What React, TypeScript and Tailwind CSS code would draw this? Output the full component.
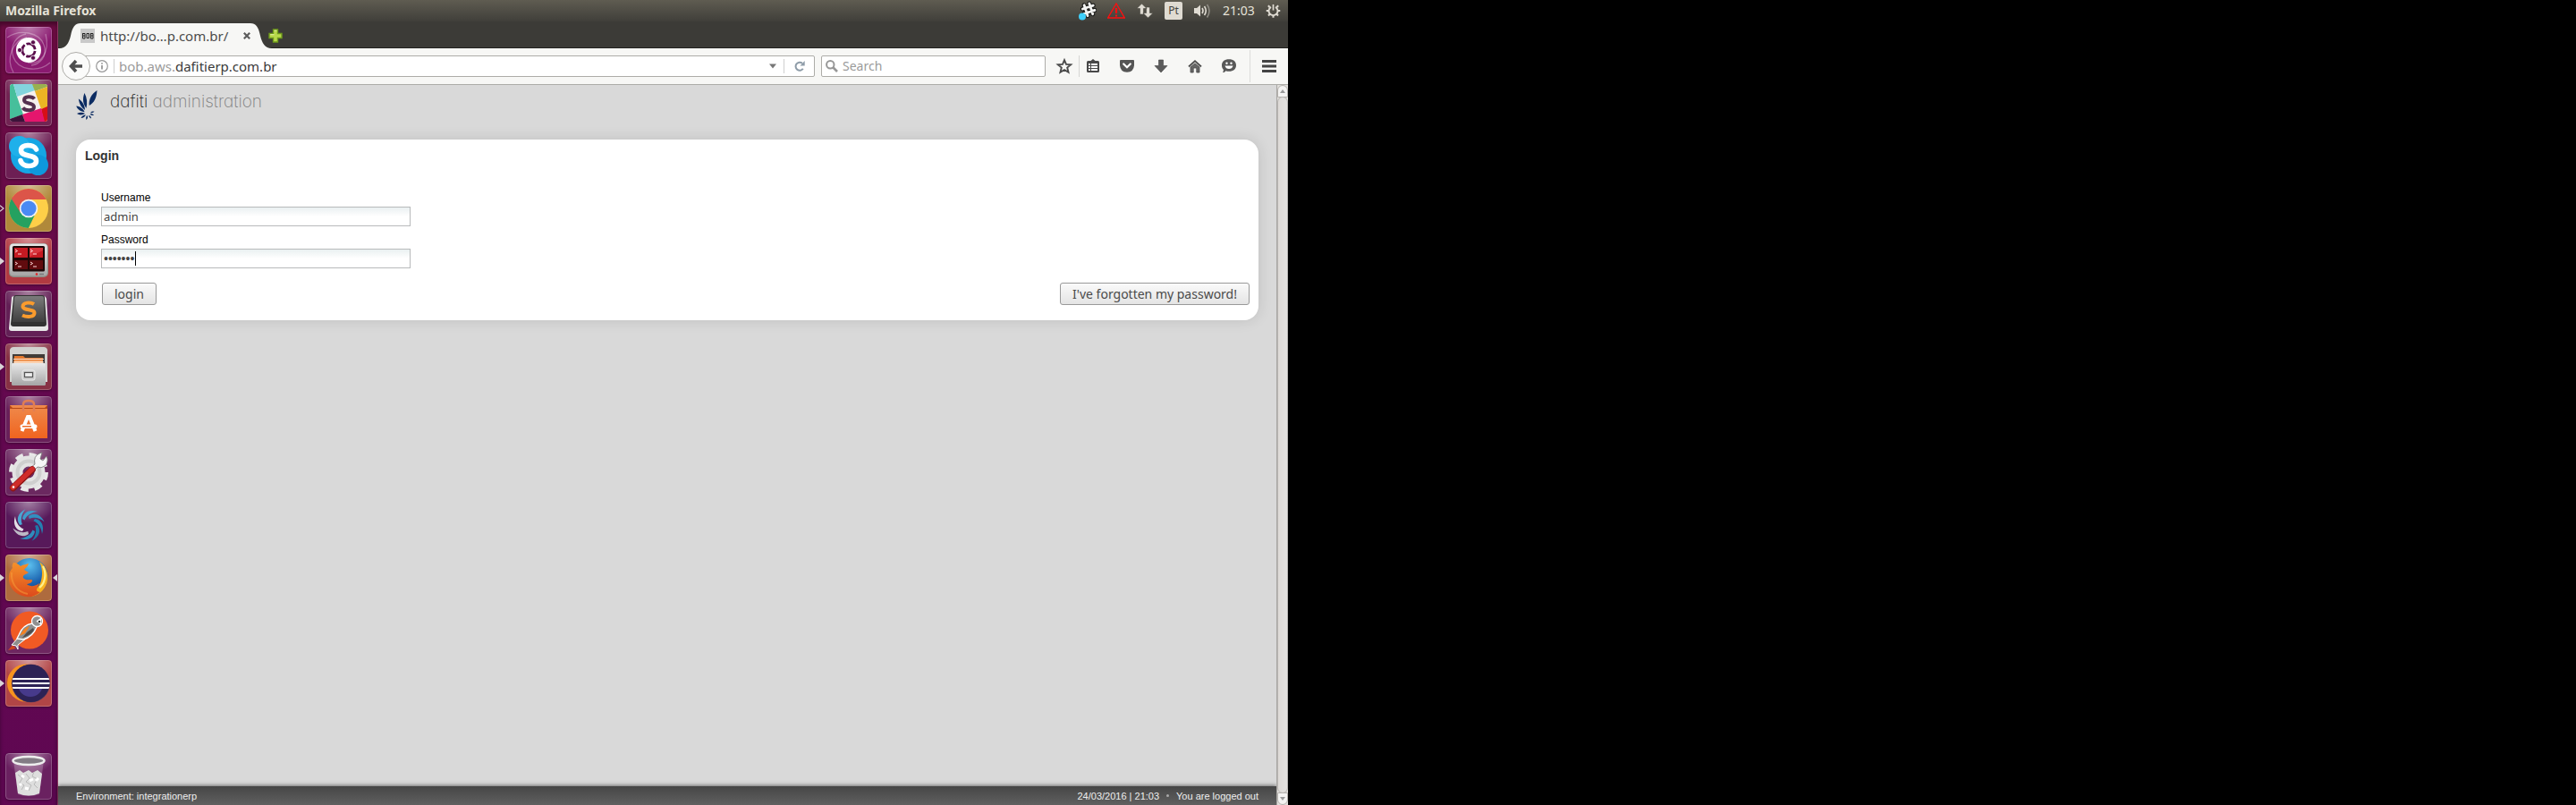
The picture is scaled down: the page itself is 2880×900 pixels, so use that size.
import React from "react";

type TileProps = {
  label: string;
  tint: string;
  pip?: "solid" | "outline";
  active?: boolean;
  children: React.ReactNode;
};

function Tile({ label, tint, pip, active, children }: TileProps) {
  return (
    <li className="grid grid-cols-[6px_52px_6px] items-center">
      <svg viewBox="0 0 6 8" className="h-2 w-[6px]" aria-hidden="true">
        {pip === "solid" && <path d="M0 0L5 4L0 8Z" fill="#d9d5d8" />}
        {pip === "outline" && <path d="M0 .8L4 4L0 7.2" fill="none" stroke="#d9d5d8" strokeWidth="1.1" />}
      </svg>
      <button
        type="button"
        aria-label={label}
        className={`h-[52px] w-[52px] overflow-hidden rounded-[4px] shadow-[0_1px_3px_rgba(0,0,0,0.35)] ${tint}`}
      >
        <svg viewBox="0 0 52 52" className="block h-full w-full" aria-hidden="true">
          <ellipse cx="26" cy="0" rx="30" ry="24" fill="url(#sheen)" />
          {children}
          <rect x=".5" y=".5" width="51" height="51" rx="3.5" fill="none" stroke="#fff" strokeOpacity=".22" />
        </svg>
      </button>
      <svg viewBox="0 0 6 8" className="h-2 w-[6px]" aria-hidden="true">
        {active && <path d="M6 0L1 4L6 8Z" fill="#d9d5d8" />}
      </svg>
    </li>
  );
}

const shutterBlades = [
  { angle: 0, fill: "#3f9ccb" },
  { angle: 45, fill: "#318fc0" },
  { angle: 90, fill: "#2480b2" },
  { angle: 135, fill: "#1f76a8" },
  { angle: 180, fill: "#2f8dbd" },
  { angle: 225, fill: "#bdb9c6" },
  { angle: 270, fill: "#e2dfe6" },
  { angle: 315, fill: "#4aa6d2" },
];

function Launcher() {
  return (
    <nav
      aria-label="Launcher"
      className="flex w-[65px] shrink-0 flex-col justify-between border-r border-[#8b3560] bg-gradient-to-b from-[#6d0c42] via-[#640850] to-[#5f0752] pb-[6px] pt-[6px] shadow-[inset_0_4px_4px_rgba(0,0,0,0.35)]"
    >
      <svg width="0" height="0" className="absolute" aria-hidden="true">
        <defs>
          <radialGradient id="sheen" cx="50%" cy="50%" r="50%">
            <stop offset="0" stopColor="#fff" stopOpacity=".45" />
            <stop offset="1" stopColor="#fff" stopOpacity="0" />
          </radialGradient>
          <linearGradient id="orangeBag" x1="0" y1="0" x2="0" y2="1">
            <stop offset="0" stopColor="#ef8a4c" />
            <stop offset="1" stopColor="#f0641f" />
          </linearGradient>
          <linearGradient id="darkKey" x1="0" y1="0" x2="0" y2="1">
            <stop offset="0" stopColor="#7b7b7b" />
            <stop offset="1" stopColor="#3f3f3f" />
          </linearGradient>
          <linearGradient id="metal" x1="0" y1="0" x2="0" y2="1">
            <stop offset="0" stopColor="#e9e9e9" />
            <stop offset="1" stopColor="#a5a5a5" />
          </linearGradient>
          <linearGradient id="fox" x1="0" y1="0" x2="0" y2="1">
            <stop offset="0" stopColor="#f5912a" />
            <stop offset="1" stopColor="#dc4a1c" />
          </linearGradient>
          <radialGradient id="globe" cx="50%" cy="20%" r="80%">
            <stop offset="0" stopColor="#5bbfee" />
            <stop offset=".6" stopColor="#1b62ae" />
            <stop offset="1" stopColor="#123a7c" />
          </radialGradient>
          <clipPath id="slackClip"><rect x="5" y="5" width="42" height="42" rx="3" /></clipPath>
          <clipPath id="chromeClip"><circle cx="26" cy="26" r="22" /></clipPath>
          <clipPath id="eclipseClip"><circle cx="28.500" cy="26" r="21" /></clipPath>
        </defs>
      </svg>
      <ul className="flex flex-col gap-[7px]">
        <Tile label="Search your computer" tint="bg-[#8a1a70]">
          <g fill="none" stroke="#fff" strokeOpacity=".3" strokeWidth="1.3">
            <path d="M2 12C16 2 38 6 43 20C48 33 38 42 29 43" />
            <path d="M50 40C36 52 14 48 9 34C4 20 13 10 23 8" />
            <path d="M9 51C0 36 8 15 24 12" />
            <path d="M45 8C50 28 40 43 25 40" />
          </g>
          <circle cx="26" cy="26" r="14" fill="#fff" />
          <circle cx="26" cy="26" r="7.200" fill="none" stroke="#5a0e4c" strokeWidth="2.800" strokeDasharray="13 2.080" strokeDashoffset="-1" />
          <g fill="#5a0e4c" stroke="#fff" strokeWidth=".8">
            <circle cx="16" cy="26" r="2.600" /><circle cx="31" cy="17.300" r="2.600" /><circle cx="31" cy="34.700" r="2.600" />
          </g>
        </Tile>
        <Tile label="Slack" tint="bg-[#722453]">
          <g clipPath="url(#slackClip)">
            <rect x="5" y="5" width="42" height="42" fill="#f5f1ef" />
            <path d="M5 5H9L13 19L20 39L5 44Z" fill="#46bf9b" />
            <path d="M9 5H31L33 12L13 19Z" fill="#83d4dd" />
            <path d="M30 5H47V8L33 13Z" fill="#99b04f" />
            <path d="M33 13L47 8V31L40 33Z" fill="#ecb424" />
            <path d="M40 33L47 30V47H43Z" fill="#d60f16" />
            <path d="M19 39L40 32L44 47H22Z" fill="#e5166d" />
            <path d="M5 44L19 39L22 47H5Z" fill="#3c133a" />
          </g>
          <path d="M32.500 21.500C30 18.500 21 18 21 23C21 28 32 25 32 30.500C32 35.500 22 35 19.500 31.500" fill="none" stroke="#55304f" strokeWidth="4" />
        </Tile>
        <Tile label="Skype" tint="bg-[#6d1f54]">
          <circle cx="26" cy="26" r="20" fill="#16a6e4" />
          <circle cx="15.500" cy="15.500" r="11.500" fill="#1fb0ea" />
          <circle cx="36.500" cy="36.500" r="11.500" fill="#0e98dc" />
          <path d="M34.500 19C32 13 17.500 12.500 17.500 20C17.500 28.500 34.500 23.500 34.500 32C34.500 39.500 19 39.500 17 31.500" fill="none" stroke="#fff" strokeWidth="5.600" strokeLinecap="round" />
        </Tile>
        <Tile label="Google Chrome" tint="bg-[#b0893a]" pip="outline">
          <g clipPath="url(#chromeClip)">
            <rect width="52" height="52" fill="#fdcf48" />
            <path d="M4 8L17 30L26 36L34 31L24 52H0V8Z" fill="#25a160" />
            <path d="M6 14L14 2H44L49 16H26L17 31Z" fill="#dc5549" />
          </g>
          <circle cx="26" cy="26" r="10.300" fill="#f1f2f2" />
          <circle cx="26" cy="26" r="8.600" fill="#4a8af4" />
        </Tile>
        <Tile label="Terminator" tint="bg-[#b13a41]" pip="solid">
          <rect x="4" y="6" width="44" height="38" rx="5" fill="#8d8d86" />
          <rect x="5" y="6.500" width="42" height="36" rx="4" fill="url(#metal)" />
          <rect x="8" y="9" width="36" height="28.500" rx="1.500" fill="#1e0808" />
          <path d="M10 11h15v11H10zM27 11h15v11H27z" fill="#c51a22" />
          <path d="M10 25h15v10H10zM27 25h15v10H27z" fill="#610b0e" />
          <path d="M27 11h15v3L27 21z" fill="#e1434a" fillOpacity=".7" />
          <path d="M11 13l2.500 1.500L11 16M14 18h4M28 13l2.500 1.500L28 16M31 18h4M11 27l2.500 1.500L11 30M14 32h4M28 27l2.500 1.500L28 30M31 32h4" fill="none" stroke="#ffd9d9" strokeWidth="1" />
          <circle cx="35" cy="40.500" r="1.300" fill="#e02121" /><path d="M38 40.500h5" stroke="#777" strokeWidth="1.500" />
        </Tile>
        <Tile label="Sublime Text" tint="bg-[#632056]">
          <path d="M7 8Q7 6 10 6H43Q45 6 46 9L48 42Q48 45 45 45H7Q4 45 4 42Z" fill="#e7e7e7" />
          <path d="M9 8Q9 5 12 5H41Q44 5 44 8L46 37Q46 40 43 40H9Q6 40 6 37Z" fill="#323232" />
          <path d="M10 8Q10 6 12 6H41Q43 6 43 8L44 35H8Z" fill="url(#darkKey)" />
          <path d="M32 15C28 12.500 19.500 13 19.500 17.500C19.500 22.500 32.500 20 32.500 25C32.500 29.500 24 30 19 27.500" fill="none" stroke="#f99b2d" strokeWidth="4" />
        </Tile>
        <Tile label="Files" tint="bg-[#873144]" pip="solid">
          <path d="M5 7Q6 4 9 4H43Q46 4 47 7V43H5Z" fill="#d2d2d0" />
          <rect x="8" y="12" width="36" height="12" fill="#413c38" />
          <path d="M10 14H20L22 16H42V24H9Z" fill="#e5792f" />
          <path d="M10 19H42V24H10Z" fill="#f8b27a" /><path d="M9 17.500H43M9 21H43" stroke="#fff" strokeWidth=".8" />
          <rect x="7" y="22" width="38" height="25" rx="1.500" fill="url(#metal)" />
          <rect x="19" y="30" width="14" height="11" rx="2" fill="#c9c9c9" stroke="#eee" />
          <rect x="21.500" y="32.500" width="9" height="5" fill="#eee" stroke="#555" strokeWidth="1.200" />
        </Tile>
        <Tile label="Ubuntu Software" tint="bg-[#68205a]">
          <path d="M5 10H47V47H5Z" fill="url(#orangeBag)" />
          <path d="M5 10L8 13H44L47 10V14H5Z" fill="#b74817" />
          <path d="M20 17V9Q20 5 26 5T32 9V17" fill="none" stroke="#e27e52" strokeWidth="2.500" />
          <path d="M18.500 39L25 23H27L33.500 39" fill="none" stroke="#fff" strokeWidth="4" />
          <rect x="16.500" y="31.500" width="19" height="4.500" rx="2" fill="#fff" />
          <rect x="19" y="33" width="10" height="1.500" fill="#ef6c28" />
        </Tile>
        <Tile label="System Settings" tint="bg-[#6b2860]">
          <circle cx="26" cy="26" r="19.500" fill="none" stroke="#e8e8e8" strokeWidth="5" strokeDasharray="8.500 6.816" />
          <circle cx="26" cy="26" r="12.500" fill="none" stroke="#e3e3e3" strokeWidth="12" />
          <circle cx="26" cy="26" r="12.500" fill="none" stroke="#cfcfcf" strokeWidth="4" />
          <path d="M29 20L33 17Q31 8 38 5L41 4L39 11L42 13L46 8Q49 14 44 19Q40 22 36 20L32 24Z" fill="#f6f6f6" stroke="#777" strokeWidth=".8" />
          <path d="M8.500 43.500L30 23" stroke="#8e1414" strokeWidth="7.500" strokeLinecap="round" />
          <path d="M8.500 43L30 22.500" stroke="#cf2c2a" strokeWidth="5.500" strokeLinecap="round" />
          <circle cx="9" cy="42.500" r="1.300" fill="#fff" />
        </Tile>
        <Tile label="Shutter" tint="bg-[#57195a]">
          {shutterBlades.map((blade) => (
            <path
              key={blade.angle}
              transform={`rotate(${blade.angle} 26 26)`}
              d="M19 19C20 11.500 27 8 36 11C30 11.500 24 14.500 21.500 20.500Z"
              fill={blade.fill}
            />
          ))}
        </Tile>
        <Tile label="Firefox" tint="bg-[#ae6b3e]" pip="solid" active>
          <circle cx="27" cy="24.500" r="20.500" fill="url(#globe)" />
          <path d="M38 8C47 14 50 26 45 35C41 43 34 47 26 47L22 42C32 42 38 37 40 29C42 21 41 14 38 8Z" fill="#f9b21f" />
          <path d="M42 13Q45.500 20 44 27T38 37" fill="none" stroke="#fff08c" strokeWidth="2.200" />
          <path d="M9 9C12 9 15 11 17 13C20 11 24 11 26 10C25 14 22 15 21 17L26 20C24 22 21 22 20 24C19 27 23 29 29 28C32 29 28 33 24 33C27 36 33 36 38 32C36 38 32 41 39 42C34 46 29 48 23 47C11 45 3 37 4 25C4 20 6 17 8 15C7 13 8 11 9 9Z" fill="url(#fox)" />
          <path d="M7 20C6 32 13 42 25 44" fill="none" stroke="#f7a03a" strokeOpacity=".5" strokeWidth="2" />
        </Tile>
        <Tile label="Postman" tint="bg-[#6e2660]">
          <circle cx="27" cy="25.500" r="21" fill="#f15a24" />
          <path d="M3 48L8 42L12 46Z" fill="#cf4320" />
          <path d="M16 32L7 42L12 43L14 47L14 42L23 35Z" fill="#8e8e8e" stroke="#fff" strokeWidth="1" />
          <path d="M30 18C23 19 18 23 15 31L13 35L20 36C27 34 32 30 35 22Z" fill="#8e8e8e" stroke="#fff" strokeWidth="1.400" />
          <path d="M27 21C22 23 19 26 16 32L22 29Z" fill="#f58220" />
          <path d="M31 23L24 28L19 34C26 32 30 29 32 25Z" fill="#4d4d4d" />
          <circle cx="35.500" cy="15.500" r="6" fill="#909090" stroke="#fff" strokeWidth="1.300" />
          <path d="M34.500 15.500L40 11.500V19.500Z" fill="#fff" /><circle cx="38" cy="16" r="1.300" fill="#333" />
        </Tile>
        <Tile label="Eclipse" tint="bg-[#b14546]" pip="solid">
          <circle cx="23" cy="25.500" r="21" fill="#f7941e" />
          <circle cx="28.500" cy="26" r="21.500" fill="#7a4a56" />
          <g clipPath="url(#eclipseClip)">
            <rect x="7" y="4" width="44" height="44" fill="#2c2255" />
            <circle cx="28" cy="27" r="14" fill="#473a8b" />
            <path d="M7 5H50V31.500H7Z" fill="#2c2255" />
            <path d="M8 21H50M8 26H50M8 31H50" stroke="#fff" strokeWidth="2.200" />
          </g>
        </Tile>
      </ul>
      <ul>
        <Tile label="Trash" tint="bg-[#6a2160]">
          <path d="M9 8L14 46Q26 50 38 46L43 8Z" fill="#fff" fillOpacity=".22" />
          <path d="M11 22L16 19L20 22L26 19L30 22L36 19L41 23L38 45Q26 50 14 45Z" fill="#dedede" />
          <path d="M14 24l5 4-3 5 5 3-3 5M23 23l4 5-4 4 6 4-3 6M32 21l-2 5 6 3-4 6 4 4" fill="none" stroke="#b9b9b9" strokeWidth="1" />
          <path d="M18 25l3 2M27 31l4-2M22 39l4 1M34 31l3-3M16 34l2 2" stroke="#fff" strokeWidth="3" />
          <ellipse cx="26" cy="8.500" rx="17.500" ry="4.500" fill="#837c85" stroke="#eee" strokeWidth="2.500" />
        </Tile>
      </ul>
    </nav>
  );
}

function TopPanel() {
  return (
    <header className="flex h-6 shrink-0 items-center justify-between bg-gradient-to-b from-[#5f5c51] to-[#403f3a] pl-[6px] pr-2 text-[#e6e2d8]">
      <h1 className="text-[14px] font-bold leading-6">Mozilla Firefox</h1>
      <div className="flex items-center gap-3">
        <svg viewBox="0 0 20 22" className="h-[22px] w-5" aria-hidden="true">
          <g transform="rotate(-18 11 10)" stroke="#1d1d1b" strokeWidth="5" strokeLinecap="round"><path d="M8 3.500V16M14 3.500V16M5 7H17.500M5 12.500H17.500" /></g>
          <g transform="rotate(-18 11 10)" stroke="#f4f4f2" strokeWidth="2.800" strokeLinecap="round"><path d="M8 3.500V16M14 3.500V16M5 7H17.500M5 12.500H17.500" /></g>
          <circle cx="4" cy="17.500" r="4" fill="#3fd0fb" />
        </svg>
        <svg viewBox="0 0 20 18" className="h-[18px] w-5" fill="none" stroke="#fb1010" aria-hidden="true">
          <path d="M10 1L19.300 17H.7Z" strokeWidth="1.400" /><path d="M10 6V12" strokeWidth="2.200" /><path d="M10 13.500V15.500" strokeWidth="2.200" />
        </svg>
        <svg viewBox="0 0 20 18" className="h-[18px] w-5" fill="#dfdbd2" aria-hidden="true">
          <path d="M6.500 1L12 6.500H8.500V13H4.500V6.500H1ZM13.500 17L8 11.500H11.500V5H15.500V11.500H19Z" stroke="#44433d" strokeWidth=".6" />
        </svg>
        <span className="flex h-5 w-5 items-center justify-center rounded-[2px] bg-[#dfdbd2] text-[12px] leading-5 text-[#45433d]">Pt</span>
        <svg viewBox="0 0 21 18" className="h-[18px] w-[21px]" aria-hidden="true">
          <path d="M1 6H4L8 2.500V15.500L4 12H1Z" fill="#dfdbd2" />
          <g fill="none" strokeWidth="1.600"><path d="M10 6Q12 9 10 12M12.500 4Q16 9 12.500 14" stroke="#dfdbd2" /><path d="M15.500 2Q20.500 9 15.500 16.500" stroke="#8f8c84" /></g>
        </svg>
        <time className="w-9 whitespace-nowrap text-[14px] leading-6">21:03</time>
        <svg viewBox="0 0 18 18" className="h-[18px] w-[17px]" fill="none" stroke="#dfdbd2" aria-hidden="true">
          <path d="M6.300 4.600A5.300 5.300 0 1 0 11.700 4.600" strokeWidth="2" />
          <path d="M9 1.500V8.500" strokeWidth="1.800" />
          <path d="M3.600 9H.8M17.200 9H14.400M5.200 12.800L3.200 14.800M12.800 12.800L14.800 14.800M9 14.500V17.300M4.800 4.800L3 3M13.200 4.800L15 3" strokeWidth="2.200" />
        </svg>
      </div>
    </header>
  );
}

function TabStrip() {
  return (
    <div className="flex h-[30px] shrink-0 items-end border-b border-[#23221f] bg-[#3c3b37] pl-px">
      <svg viewBox="0 0 24 28" className="-mb-px h-7 w-6 shrink-0" aria-hidden="true">
        <path d="M0 28C8 28 11 22 13 14C15 4 18 0 24 0V28Z" fill="#f7f7f5" />
      </svg>
      <div className="-mb-px flex h-7 w-[190px] shrink-0 items-center bg-[#f7f7f5]">
        <svg viewBox="0 0 16 16" className="h-4 w-4 shrink-0" aria-hidden="true">
          <path d="M0 0H16V16H0Z" fill="#c9c9c9" />
          <path d="M2.500 5V11H5V5.500H2.500M2.500 8H5M7 5.500H9.500V10.500H7ZM11.500 5V11H14V5.500H11.500M11.500 8H14" fill="none" stroke="#222" strokeWidth="1" />
        </svg>
        <span className="ml-[6px] flex-1 whitespace-nowrap text-[15px] leading-7 text-[#4c4c4c]">http://bo…p.com.br/</span>
        <button type="button" aria-label="Close tab" className="-mr-1 flex h-4 w-4 items-center justify-center">
          <svg viewBox="0 0 8 8" className="h-2 w-2" stroke="#5c5c5c" strokeWidth="2.200"><path d="M.8 .8L7.200 7.200M7.200 .8L.8 7.200" /></svg>
        </button>
      </div>
      <svg viewBox="0 0 24 28" className="-mb-px h-7 w-6 shrink-0" aria-hidden="true">
        <path d="M24 28C16 28 13 22 11 14C9 4 6 0 0 0V28Z" fill="#f7f7f5" />
      </svg>
      <button type="button" aria-label="New tab" className="-ml-1 mb-[5px] h-4 w-4">
        <svg viewBox="0 0 16 16" className="h-4 w-4"><path d="M5.500 1H10.500V5.500H15V10.500H10.500V15H5.500V10.500H1V5.500H5.500Z" fill="#b9d94b" stroke="#6f9a1c" strokeWidth="1.400" /><path d="M6.500 2.200H9.500M2.200 6.700H6.500" stroke="#e4f2a6" /></svg>
      </button>
    </div>
  );
}

function ToolButton({ label, children }: { label: string; children: React.ReactNode }) {
  return (
    <button type="button" aria-label={label} className="flex h-6 w-[30px] items-center justify-center">
      <svg viewBox="0 0 16 16" className="h-4 w-4 overflow-visible">{children}</svg>
    </button>
  );
}

function NavBar() {
  return (
    <div className="flex h-[41px] shrink-0 items-center border-b border-[#adaca8] bg-[#f7f7f5] pl-1">
      <button type="button" aria-label="Back" className="z-10 flex h-8 w-8 shrink-0 items-center justify-center rounded-full border border-[#adaca8] bg-[#fbfbfa]">
        <svg viewBox="0 0 16 16" className="h-4 w-4"><path d="M8 2L2.500 8L8 14M3 8H15" fill="none" stroke="#4f4f4f" strokeWidth="3.600" /></svg>
      </button>
      <div className="-ml-2 flex h-6 flex-1 items-center rounded-[2px] border border-[#adaca8] bg-white pl-[13px]">
        <svg viewBox="0 0 14 14" className="h-[14px] w-[14px] shrink-0" fill="none" stroke="#979797" aria-hidden="true">
          <circle cx="7" cy="7" r="6.300" strokeWidth="1.200" /><path d="M7 6V10.500M7 3.300V4.800" strokeWidth="1.800" />
        </svg>
        <span className="ml-[6px] h-4 w-px bg-[#cfcfcf]" />
        <p className="ml-[5px] flex-1 whitespace-nowrap text-[15px] leading-5 text-[#3a3a3a]"><span className="text-[#9b9b9b]">bob.aws.</span>dafitierp.com.br</p>
        <button type="button" aria-label="Show history" className="mr-2 flex h-4 w-2 items-center">
          <svg viewBox="0 0 8 6" className="h-[6px] w-2"><path d="M0 .5H8L4 5.500Z" fill="#777" /></svg>
        </button>
        <button type="button" aria-label="Reload" className="flex h-4 w-[34px] items-center justify-center border-l border-[#cfcfcf]">
          <svg viewBox="0 0 12 12" className="h-3 w-3"><path d="M9.800 8.800A4.500 4.500 0 1 1 9 2.800" fill="none" stroke="#8e9ca8" strokeWidth="2" /><path d="M11.700 0V5.500H6.500Z" fill="#8e9ca8" /></svg>
        </button>
      </div>
      <label className="ml-[7px] flex h-6 w-[251px] items-center rounded-[2px] border border-[#adaca8] bg-white pl-1">
        <svg viewBox="0 0 14 14" className="h-[14px] w-[14px] shrink-0" fill="none" stroke="#979797" aria-hidden="true">
          <circle cx="5.300" cy="5.300" r="4.200" strokeWidth="2" /><path d="M8.500 8.500L13 13" strokeWidth="2.600" />
        </svg>
        <input type="search" aria-label="Search" placeholder="Search" className="ml-[5px] w-full bg-transparent text-[14px] leading-5 outline-none placeholder:text-[#9b9b9b]" />
      </label>
      <div className="ml-[6px] flex items-center">
        <div className="flex w-8 items-center border-r border-[#d6d6d4]">
          <ToolButton label="Bookmark this page">
            <path d="M8 1.200L10 5.900L15.200 6.300L11.200 9.600L12.500 14.700L8 12L3.500 14.700L4.800 9.600L.8 6.300L6 5.900Z" fill="none" stroke="#4a4a4a" strokeWidth="1.900" />
          </ToolButton>
        </div>
        <div className="flex gap-2">
          <ToolButton label="Show bookmarks">
            <path d="M2.500 2H5.500L8 0L10.500 2H13.500Q15 2 15 3.500V13.500Q15 15 13.500 15H2.500Q1 15 1 13.500V3.500Q1 2 2.500 2Z" fill="#484848" />
            <path d="M3 5H5V7H3ZM6 5H13V7H6ZM3 8H5V10H3ZM6 8H13V10H6ZM3 11H5V13H3ZM6 11H13V13H6Z" fill="#fff" />
          </ToolButton>
          <ToolButton label="Save to Pocket">
            <path d="M1 1H15Q16 1 16 2V7Q15.500 14.500 8 14.800Q.5 14.500 0 7V2Q0 1 1 1Z" fill="#555" />
            <path d="M4.200 5.500L8 9.200L11.800 5.500" fill="none" stroke="#fff" strokeWidth="2.200" strokeLinecap="round" />
          </ToolButton>
          <ToolButton label="Downloads">
            <path d="M5.500 1H10.500V7.500H15L8 15L1 7.500H5.500Z" fill="#5b5b5b" stroke="#454545" strokeWidth=".6" />
          </ToolButton>
          <ToolButton label="Home">
            <path d="M1 8.500L8 2.200L15 8.500" fill="none" stroke="#4a4a4a" strokeWidth="1.800" />
            <path d="M3 9L8 4.800L13 9V15H9.800V10H6.200V15H3Z" fill="#666" stroke="#4a4a4a" strokeWidth=".8" />
          </ToolButton>
          <ToolButton label="Firefox Hello">
            <path d="M8 .3C13 .3 16 3 16 7C16 11 13 13.800 8 13.800C6.500 13.800 5.500 13.600 4.500 13.200C3.500 14.500 2.500 15 1 15C1.700 14 2 12.800 1.800 11.700C.6 10.500 0 9 0 7C0 3 3 .3 8 .3Z" fill="#585858" />
            <circle cx="5.500" cy="4.800" r="1.200" fill="#fff" /><circle cx="10.500" cy="4.800" r="1.200" fill="#fff" /><path d="M3.500 7.500H12.500Q11.500 11 8 11T3.500 7.500Z" fill="#fff" />
          </ToolButton>
        </div>
        <div className="ml-2 flex h-9 w-[43px] items-center justify-center border-l border-[#dcdcda]">
          <ToolButton label="Open menu">
            <path d="M0 2.500H16M0 8H16M0 13.500H16" stroke="#444" strokeWidth="2.800" />
          </ToolButton>
        </div>
      </div>
    </div>
  );
}

function BrandMark() {
  return (
    <svg viewBox="0 0 24 34" className="h-[34px] w-6" fill="#0c2c62" aria-hidden="true">
      <path d="M23.500 0C23 9 20 14 14.800 17C13.800 11 17 4 23.500 0Z" />
      <path d="M9.500 3C12.300 8 12.800 14 11.500 20C7.500 15 7 9 9.500 3Z" />
      <path d="M2.800 9.500C7 12 9.500 16 10 22C6 19.500 3.500 15 2.800 9.500Z" />
      <path d="M.3 17.500C4.500 18 8 20.500 9.500 24C5.500 24 1.500 21.500 .3 17.500Z" />
      <path d="M1 26C4 24.500 7 24.500 10 25.800C7.500 27.800 3.500 28 1 26Z" />
      <path d="M5.500 31C6.500 28.800 8 27.800 10.800 27.300C10.300 29.500 8 31 5.500 31Z" />
      <path d="M11.500 33C10.800 30.500 11.200 29.500 12.300 28C13.500 29.500 13.200 31.500 11.500 33Z" />
      <path d="M17 31.500C15 30.800 14.200 29.500 14.200 28C15.800 28.300 17 29.500 17 31.500Z" />
      <path d="M20 28C18 28.300 16.700 27.800 15.500 26.700C17 26 19 26.300 20 28Z" />
      <path d="M20.500 23.800C19.500 25 17.500 25.500 16 25C17 23.500 18.500 23 20.500 23.800Z" />
    </svg>
  );
}

const fieldStyle =
  "block h-[22px] w-full border border-[#b8babb] bg-gradient-to-b from-[#eaf0f1] to-white to-50% px-[2px] text-[#444] outline-none";
const buttonStyle =
  "h-[25px] rounded-[3px] border border-[#999] bg-gradient-to-b from-[#fafafa] to-[#e4e4e4] px-[13px] text-[14px] leading-5 text-[#4a4a4a]";

function LoginPage() {
  return (
    <div className="flex min-w-0 flex-1 flex-col bg-[#d9d9d9] font-['Liberation_Sans',Arial,sans-serif]">
      <div className="flex items-start gap-[14px] px-5 pt-[6px]">
        <BrandMark />
        <p className="text-[19px] font-extralight leading-[26px] text-[#808080] font-['Inter',sans-serif] [font-feature-settings:'cv11']">
          <span className="text-[#222]">dafiti</span> administration
        </p>
      </div>
      <main className="mx-5 mt-[21px] rounded-[16px] bg-white px-[10px] pb-[17px] pt-[10px] shadow-[0_0_16px_rgba(0,0,0,0.12)]">
        <h2 className="text-[14px] font-bold leading-4 text-[#333]">Login</h2>
        <form className="mt-[30px]" onSubmit={(e) => e.preventDefault()}>
          <div className="ml-[18px] w-[346px] text-[12px] text-black">
            <label htmlFor="username" className="block leading-[19px]">Username</label>
            <input id="username" type="text" defaultValue="admin" className={`${fieldStyle} text-[13px] font-['Noto_Sans',sans-serif]`} />
            <label htmlFor="password" className="mt-[6px] block leading-[19px]">Password</label>
            <div className="relative">
              <input id="password" type="password" defaultValue="dafitip" className={`${fieldStyle} text-[14px]`} />
              <span className="absolute left-[38px] top-[3px] h-4 w-px bg-black" />
            </div>
          </div>
          <div className="ml-[19px] mt-4 flex justify-between font-['Noto_Sans',sans-serif]">
            <button type="submit" className={buttonStyle}>login</button>
            <button type="button" className={buttonStyle}>I've forgotten my password!</button>
          </div>
        </form>
      </main>
      <footer className="mt-auto flex h-[21px] items-center justify-between bg-gradient-to-b from-[#464646] to-[#606060] px-5 text-[11px] leading-4 text-[#eee] shadow-[0_-1px_4px_rgba(0,0,0,0.5)]">
        <span>Environment: integrationerp</span>
        <p className="flex items-center gap-2">
          <span>24/03/2016 | 21:03</span>
          <span className="h-[3px] w-[3px] rounded-full bg-[#aaa]" />
          <span>You are logged out</span>
        </p>
      </footer>
    </div>
  );
}

function Scrollbar() {
  return (
    <div aria-hidden="true" className="flex w-[13px] shrink-0 flex-col border-l border-[#a9a7a4] bg-[#e0dedb]">
      <span className="flex h-[14px] items-center justify-center rounded-t-[6px] border border-[#b4b1ad] bg-[#f4f3f2]">
        <svg viewBox="0 0 6 4" className="h-1 w-[6px]"><path d="M0 4L3 0L6 4Z" fill="#999" /></svg>
      </span>
      <span className="-my-px flex-1 rounded-[6px] border border-[#b8b5b2] bg-gradient-to-r from-[#dddad7] to-[#e4e2e0]" />
      <span className="flex h-[14px] items-center justify-center rounded-b-[6px] border border-[#b4b1ad] bg-[#f4f3f2]">
        <svg viewBox="0 0 6 4" className="h-1 w-[6px]"><path d="M0 0L3 4L6 0Z" fill="#999" /></svg>
      </span>
    </div>
  );
}

export default function App() {
  return (
    <div className="min-h-screen bg-black font-['Noto_Sans',sans-serif]">
      <div className="flex min-h-screen w-1/2 flex-col">
        <TopPanel />
        <div className="flex flex-1">
          <Launcher />
          <div className="flex min-w-0 flex-1 flex-col">
            <TabStrip />
            <NavBar />
            <div className="flex flex-1">
              <LoginPage />
              <Scrollbar />
            </div>
          </div>
        </div>
      </div>
    </div>
  );
}
